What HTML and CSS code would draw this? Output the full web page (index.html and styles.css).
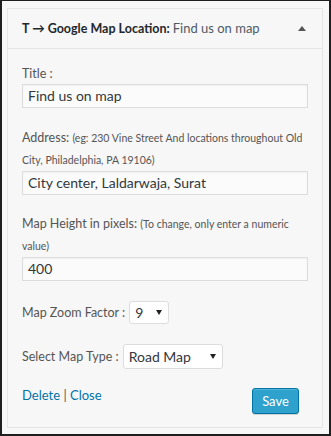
FILE: index.html
```html
<!DOCTYPE html>
<html>
<head>
<meta charset="utf-8">
<link rel="stylesheet" href="styles.css">
</head>
<body>
<div class="widget">
  <div class="widget-top">
    <h3 class="widget-title">T → Google Map Location: <span class="in-title">Find us on map</span></h3>
    <span class="toggle"></span>
  </div>
  <div class="widget-inside">
    <div class="field f1">
      <div class="label">Title :</div>
      <div class="input">Find us on map</div>
    </div>
    <div class="field f2">
      <div class="label lh">Address: <small>(eg: 230 Vine Street And locations throughout Old City, Philadelphia, PA 19106)</small></div>
      <div class="input">City center, Laldarwaja, Surat</div>
    </div>
    <div class="field f3">
      <div class="label lh">Map Height in pixels: <small>(To change, only enter a numeric value)</small></div>
      <div class="input">400</div>
    </div>
    <div class="row zoom">
      <span class="label">Map Zoom Factor :</span>
      <div class="select sel-zoom"><span>9</span><i class="caret"></i></div>
    </div>
    <div class="row type">
      <span class="label">Select Map Type :</span>
      <div class="select sel-type"><span>Road Map</span><i class="caret"></i></div>
    </div>
    <div class="actions">
      <div class="links"><a>Delete</a> <span class="sep">|</span> <a>Close</a></div>
      <button class="save">Save</button>
    </div>
  </div>
</div>
</body>
</html>
```

FILE: styles.css
```css
html, body { margin: 0; padding: 0; }
body {
  width: 331px;
  height: 436px;
  box-sizing: border-box;
  border-style: solid;
  border-color: #1e1e1e;
  border-width: 1px 2px 2px 2px;
  background: #f7f7f7;
  padding: 7px 6px 0 5px;
  font-family: Lato, "Open Sans", sans-serif;
  font-size: 12.5px;
  color: #555;
}
.widget {
  border: 1px solid #e5e5e5;
  background: #f7f7f7;
  height: 420px;
  box-sizing: border-box;
}
.widget-top {
  height: 40px;
  border-bottom: 1px solid #e5e5e5;
  box-sizing: border-box;
  display: flex;
  align-items: center;
  padding: 0 14px 0 14px;
}
.widget-title {
  margin: 0;
  font-size: 12.5px;
  font-weight: 700;
  color: #23282d;
  flex: 1;
  line-height: 1;
}
.in-title { font-weight: 400; color: #4f5a66; font-size: 13px; }
.toggle {
  width: 0; height: 0;
  border-left: 4px solid transparent;
  border-right: 4px solid transparent;
  border-bottom: 5px solid #555;
  margin-right: 2px;
}
.widget-inside {
  padding: 15px 14px 0 14px;
}
.f1 { margin-bottom: 19px; }
.f2 { margin-bottom: 18px; }
.f3 { margin-bottom: 20px; }
.label { line-height: 20px; color: #555; }
.label.lh { line-height: 22px; }
.label small { font-size: 10.5px; line-height: 1; }
.input {
  height: 24px;
  box-sizing: border-box;
  border: 1px solid #ddd;
  background: #fbfbfb;
  box-shadow: inset 0 1px 2px rgba(0,0,0,.05);
  padding: 0 5px;
  line-height: 22px;
  font-size: 14px;
  color: #32373c;
}
.row { display: flex; align-items: center; }
.row .label { margin-right: 4px; }
.zoom { margin-bottom: 20px; }
.type { margin-bottom: 16px; }
.select {
  display: flex;
  align-items: center;
  box-sizing: border-box;
  border: 1px solid #ddd;
  border-radius: 3px;
  background: #fff;
  color: #32373c;
  font-size: 14px;
  padding: 0 6px 0 5px;
}
.select span { flex: 1; }
.sel-zoom { width: 40px; height: 23px; }
.sel-type { width: 100px; height: 25px; }
.caret {
  width: 0; height: 0;
  border-left: 3px solid transparent;
  border-right: 3px solid transparent;
  border-top: 5px solid #222;
}
.actions {
  display: flex;
  justify-content: space-between;
  align-items: flex-start;
}
.links { color: #555; line-height: 20px; font-size: 13px; }
.links a { color: #0073aa; }
.sep { color: #555; }
.save {
  margin-top: 3px;
  margin-right: 9px;
  width: 47px;
  height: 26px;
  border: 1px solid #0074a2;
  border-radius: 3px;
  background: #2ea2cc;
  box-shadow: inset 0 1px 0 rgba(120,200,230,.5), 0 1px 0 rgba(0,0,0,.15);
  color: #fff;
  font-family: Lato, "Open Sans", sans-serif;
  font-size: 13px;
  padding: 0;
}
```
